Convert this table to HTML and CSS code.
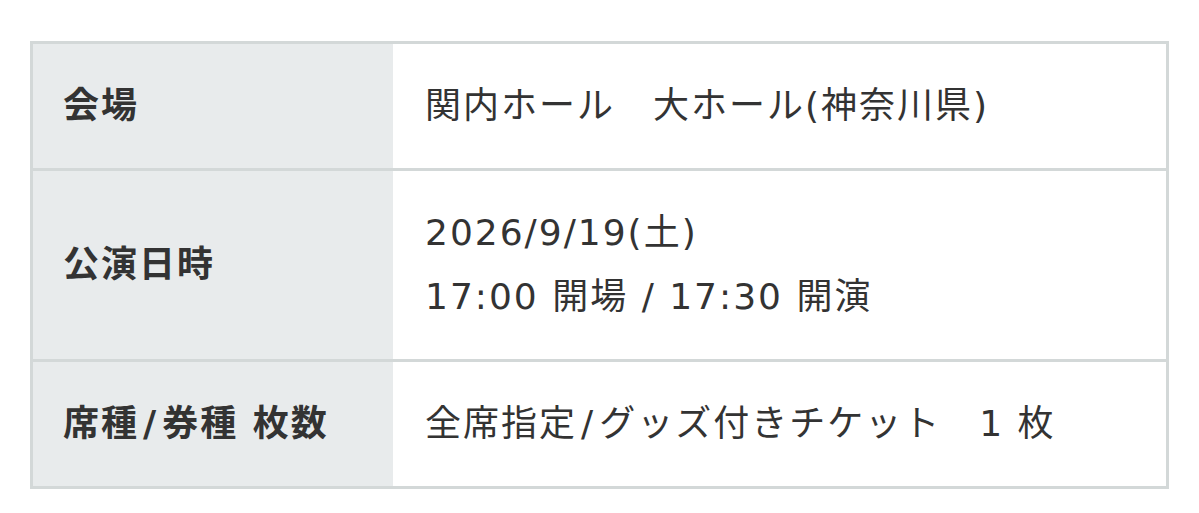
FILE: index.html
```html
<!DOCTYPE html>
<html lang="ja">
<head>
<meta charset="utf-8">
<link rel="stylesheet" href="styles.css">
</head>
<body>
<div class="page">
  <table class="info">
    <tr>
      <th class="label">会場</th>
      <td class="value">関内ホール　大ホール(神奈川県)</td>
    </tr>
    <tr>
      <th class="label">公演日時</th>
      <td class="value">2026/9/19(土)<br>17:00 開場 / 17:30 開演</td>
    </tr>
    <tr>
      <th class="label">席種<span class="slash">/</span>券種 枚数</th>
      <td class="value">全席指定<span class="slash">/</span>グッズ付きチケット　1 枚</td>
    </tr>
  </table>
</div>
</body>
</html>
```
FILE: styles.css
```css
html, body {
  margin: 0;
  padding: 0;
  background: #ffffff;
}
.page {
  padding: 41px 30px 0 30px;
}
.info {
  width: 1139px;
  border-collapse: collapse;
  font-family: "DejaVu Sans", "Noto Sans CJK JP", sans-serif;
  font-size: 36px;
  letter-spacing: 2px;
  line-height: 64px;
  color: #333333;
}
.info tr {
  border: 3px solid #d3d8d8;
}
.label {
  width: 300px;
  background: #e8ebec;
  text-align: left;
  font-weight: 700;
  padding: 30px 30px;
  vertical-align: middle;
  white-space: nowrap;
}
.value {
  background: #ffffff;
  font-weight: 400;
  padding: 30px 30px 30px 32px;
  vertical-align: middle;
}
.slash {
  margin: 0 4px;
}
```
